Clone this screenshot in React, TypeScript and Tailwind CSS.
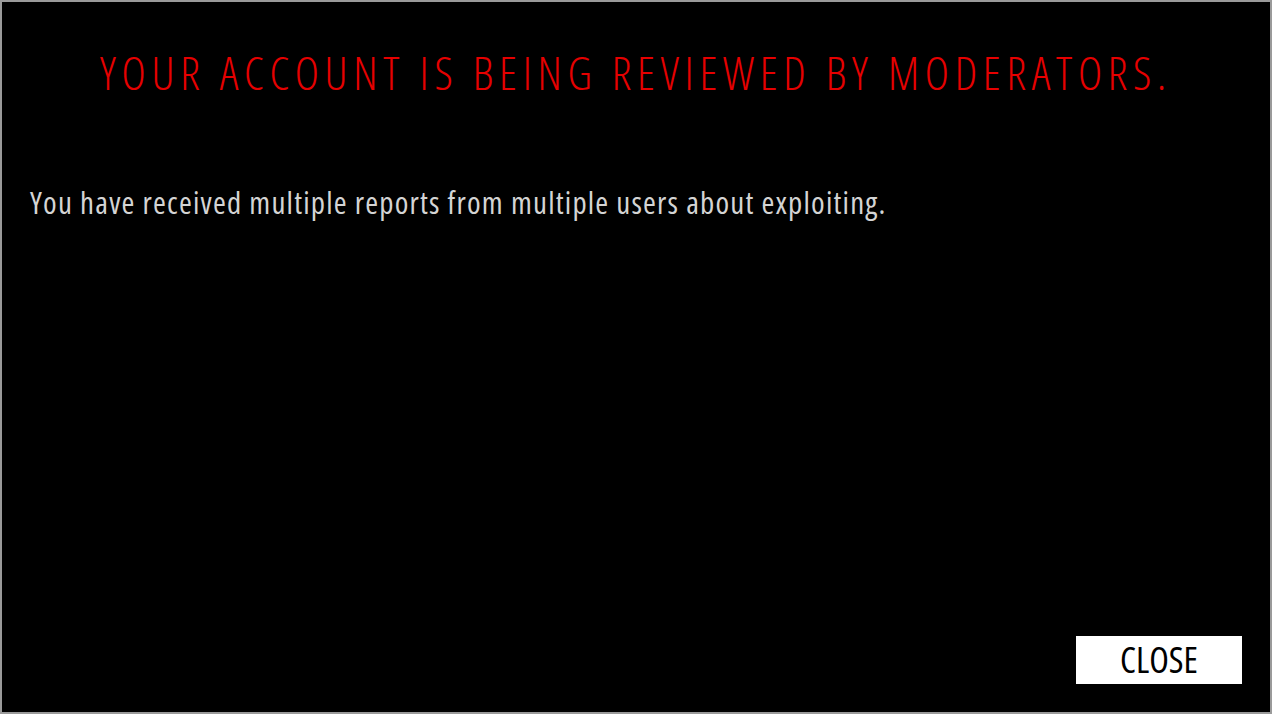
export default function App() {
  return (
    <div
      className="flex h-[714px] w-[1272px] flex-col border-2 border-[#9a9a9a] bg-black"
      style={{ fontFamily: '"Open Sans", "Noto Sans", sans-serif' }}
    >
      <h1 className="pt-[35px] text-center text-[46px] leading-[70px] font-light tracking-[5.7px] text-[#e60000] font-stretch-condensed">
        YOUR ACCOUNT IS BEING REVIEWED BY MODERATORS.
      </h1>
      <p className="mt-[75px] pl-[28px] text-[31px] leading-[40px] font-normal tracking-[1.2px] text-[#d4d4d4] font-stretch-condensed">
        You have received multiple reports from multiple users about exploiting.
      </p>
      <div className="mt-auto flex justify-end pr-[28px] pb-[28px]">
        <button className="flex h-[48px] w-[166px] items-center justify-center bg-white text-[36px] text-black font-stretch-condensed">
          CLOSE
        </button>
      </div>
    </div>
  );
}
